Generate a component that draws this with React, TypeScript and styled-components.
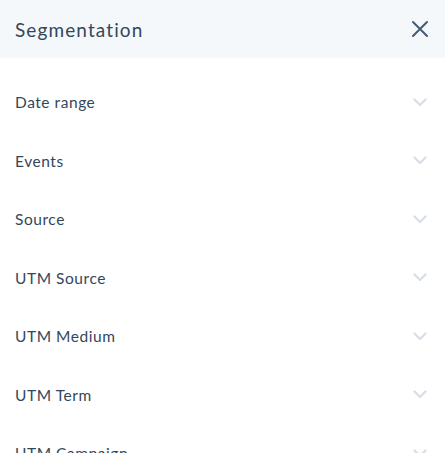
import React from 'react'
import styled, { createGlobalStyle } from 'styled-components'

const GlobalStyle = createGlobalStyle`
    html, body {
        margin: 0;
        padding: 0;
        background: #ffffff;
    }
    body {
        font-family: Lato, "Open Sans", sans-serif;
        color: #33475b;
        overflow: hidden;
    }
`

const filters = ['Date range', 'Events', 'Source', 'UTM Source', 'UTM Medium', 'UTM Term', 'UTM Campaign']

export default function App(): JSX.Element {
    return (
        <>
            <GlobalStyle />
            <StyledPanel>
                <Header>
                    <Title>Segmentation</Title>
                    <CloseButton aria-label="Close">
                        <svg width="18" height="18" viewBox="0 0 18 18">
                            <path d="M2 2 L16 16 M16 2 L2 16" stroke="#425b76" strokeWidth="2" strokeLinecap="round" />
                        </svg>
                    </CloseButton>
                </Header>
                <FilterList>
                    {filters.map(name => (
                        <FilterRow key={name}>
                            <FilterLabel>{name}</FilterLabel>
                            <svg width="14" height="9" viewBox="0 0 14 9">
                                <path d="M1.5 1.5 L7 7 L12.5 1.5" fill="none" stroke="#d9dfe7" strokeWidth="2.4" strokeLinecap="round" strokeLinejoin="round" />
                            </svg>
                        </FilterRow>
                    ))}
                </FilterList>
            </StyledPanel>
        </>
    )
}

const StyledPanel = styled.div`
    width: 445px;
    height: 453px;
    display: flex;
    flex-direction: column;
    overflow: hidden;
`

const Header = styled.div`
    height: 58px;
    flex-shrink: 0;
    display: flex;
    align-items: center;
    justify-content: space-between;
    padding: 0 15px;
    background: #f5f8fa;
`

const Title = styled.h2`
    margin: 0;
    font-size: 19px;
    font-weight: 400;
    letter-spacing: 1.1px;
    color: #33475b;
`

const CloseButton = styled.button`
    border: 0;
    background: none;
    padding: 0;
    display: flex;
    margin-right: 1px;
    cursor: pointer;
`

const FilterList = styled.div`
    display: flex;
    flex-direction: column;
    padding-top: 15px;
`

const FilterRow = styled.div`
    height: 58.5px;
    flex-shrink: 0;
    display: flex;
    align-items: center;
    justify-content: space-between;
    padding: 0 18px 0 15px;
`

const FilterLabel = styled.span`
    font-size: 15.5px;
    letter-spacing: 0.55px;
    color: #33475b;
`
